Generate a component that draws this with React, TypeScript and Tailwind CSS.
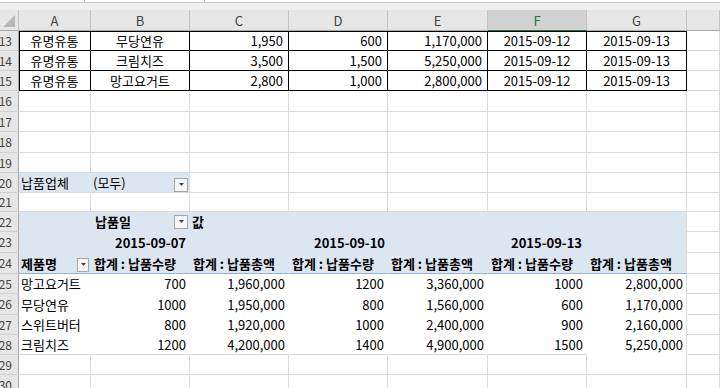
import type { ReactNode } from 'react'

const W = ['w-[72px]', 'w-[99px]', 'w-[99px]', 'w-[99px]', 'w-[100px]', 'w-[99px]', 'w-[100px]', 'w-[33px]']

const H: Record<number, string> = {
  13: 'h-[20px]',
  14: 'h-[20px]',
  15: 'h-[20px]',
  16: 'h-[21px]',
  17: 'h-[20px]',
  18: 'h-[21px]',
  19: 'h-[20px]',
  20: 'h-[20px]',
  21: 'h-[19px]',
  22: 'h-[20px]',
  23: 'h-[21px]',
  24: 'h-[21px]',
  25: 'h-[20px]',
  26: 'h-[21px]',
  27: 'h-[20px]',
  28: 'h-[20px]',
  29: 'h-[20px]',
  30: 'h-[20px]'
}

const grid = 'border-[#dadada] bg-white'
const black = 'border-black bg-white'
const blue = 'border-[#dce6f1] bg-[#dce6f1]'
const blueEdge = 'border-r-[#dadada] border-b-[#dce6f1] bg-[#dce6f1]'
const blank = 'border-white bg-white'
const blankEdge = 'border-r-[#dadada] border-b-white bg-white'

const Row = ({ n, children }: { n: number; children: ReactNode }) => (
  <div className={`flex ${H[n]}`}>
    <div className="flex w-[19px] shrink-0 items-center justify-end overflow-hidden border-r border-b border-r-[#a8a8a8] border-b-[#d0d0d0] bg-[#e6e6e6] pr-[6px] text-[12px] text-[#444]">
      {n}
    </div>
    {children}
  </div>
)

const Cell = ({ c, className = '', children }: { c: number; className?: string; children?: ReactNode }) => (
  <div
    className={`${W[c]} flex shrink-0 items-center overflow-hidden whitespace-nowrap border-r border-b ${className}`}
  >
    {children}
  </div>
)

const Drop = ({ className = '' }: { className?: string }) => (
  <span
    className={`flex h-[14px] shrink-0 items-center justify-center border border-[#a6a6a6] bg-[#f7f7f7] ${className}`}
  >
    <svg height="3" viewBox="0 0 5 3" width="5">
      <path d="M0 0h5L2.5 3z" fill="#444" />
    </svg>
  </span>
)

const EmptyRow = ({ n }: { n: number }) => (
  <Row n={n}>
    {W.map((_, i) => (
      <Cell c={i} className={grid} key={i} />
    ))}
  </Row>
)

const source = [
  ['유명유통', '무당연유', '1,950', '600', '1,170,000', '2015-09-12', '2015-09-13'],
  ['유명유통', '크림치즈', '3,500', '1,500', '5,250,000', '2015-09-12', '2015-09-13'],
  ['유명유통', '망고요거트', '2,800', '1,000', '2,800,000', '2015-09-12', '2015-09-13']
]

const pivot = [
  ['망고요거트', '700', '1,960,000', '1200', '3,360,000', '1000', '2,800,000'],
  ['무당연유', '1000', '1,950,000', '800', '1,560,000', '600', '1,170,000'],
  ['스위트버터', '800', '1,920,000', '1000', '2,400,000', '900', '2,160,000'],
  ['크림치즈', '1200', '4,200,000', '1400', '4,900,000', '1500', '5,250,000']
]

const letters = ['A', 'B', 'C', 'D', 'E', 'F', 'G', '']

const App = () => {
  return (
    <div className="h-[388px] w-[720px] overflow-hidden bg-white font-['Noto_Sans_CJK_KR','Noto_Sans',sans-serif] text-[13px] leading-none text-black">
      {/* formula bar remains */}
      <div className="flex h-[3px] border-b border-[#c8c8c8] bg-white">
        <div className="w-[85px] border-r border-[#c8c8c8]" />
        <div className="w-[120px] border-r border-[#c8c8c8]" />
      </div>
      <div className="h-[7px] bg-[#efefef]" />

      {/* column headers */}
      <div className="flex h-[21px] bg-[#e6e6e6]">
        <div className="relative w-[19px] shrink-0 border-r border-b border-r-[#c4c4c4] border-b-[#a8a8a8]">
          <svg className="absolute right-[3px] bottom-[3px]" height="12" viewBox="0 0 12 12" width="12">
            <path d="M12 0V12H0z" fill="#b8b8b8" />
          </svg>
        </div>
        {letters.map((l, i) => (
          <div
            className={`${W[i]} flex shrink-0 items-center justify-center border-r border-b text-[13px] ${
              l === 'F'
                ? 'border-r-[#c4c4c4] border-b-[#217346] bg-[#d2d2d2] text-[#217346]'
                : 'border-r-[#c4c4c4] border-b-[#a8a8a8] text-[#444]'
            }`}
            key={i}
          >
            {l}
          </div>
        ))}
      </div>

      {/* source rows */}
      {source.map((r, ri) => (
        <Row key={ri} n={13 + ri}>
          {r.map((v, i) => (
            <Cell
              c={i}
              className={`${black} ${i <= 1 || i >= 5 ? 'justify-center' : 'justify-end pr-[5px]'} ${
                ri === 0
                  ? i === 0
                    ? 'shadow-[inset_1px_1px_0_#000]'
                    : 'shadow-[inset_0_1px_0_#000]'
                  : i === 0
                    ? 'shadow-[inset_1px_0_0_#000]'
                    : ''
              }`}
              key={i}
            >
              {v}
            </Cell>
          ))}
          <Cell c={7} className={grid} />
        </Row>
      ))}

      <EmptyRow n={16} />
      <EmptyRow n={17} />
      <EmptyRow n={18} />
      <EmptyRow n={19} />

      {/* report filter */}
      <Row n={20}>
        <Cell c={0} className="border-r-[#dce6f1] border-b-[#dadada] bg-[#dce6f1] pl-[2px]">
          납품업체
        </Cell>
        <Cell c={1} className="justify-between border-r-[#dadada] border-b-[#dadada] bg-[#dce6f1] pl-[2px]">
          <span>(모두)</span>
          <Drop className="mt-[4px] mr-[1px] w-[14px]" />
        </Cell>
        {[2, 3, 4, 5, 6, 7].map((i) => (
          <Cell c={i} className={grid} key={i} />
        ))}
      </Row>

      <EmptyRow n={21} />

      {/* pivot header */}
      <Row n={22}>
        <Cell c={0} className={blue} />
        <Cell c={1} className={`${blue} justify-between pl-[4px] font-bold`}>
          <span>납품일</span>
          <Drop className="mr-[1px] w-[14px]" />
        </Cell>
        <Cell c={2} className={`${blue} pl-[2px] font-bold`}>
          값
        </Cell>
        <Cell c={3} className={blue} />
        <Cell c={4} className={blue} />
        <Cell c={5} className={blue} />
        <Cell c={6} className={blueEdge} />
        <Cell c={7} className={grid} />
      </Row>
      <Row n={23}>
        <Cell c={0} className={blue} />
        <Cell c={1} className={`${blue} justify-end pr-[3px] font-bold`}>
          2015-09-07
        </Cell>
        <Cell c={2} className={blue} />
        <Cell c={3} className={`${blue} justify-end pr-[2px] font-bold`}>
          2015-09-10
        </Cell>
        <Cell c={4} className={blue} />
        <Cell c={5} className={`${blue} justify-end pr-[4px] font-bold`}>
          2015-09-13
        </Cell>
        <Cell c={6} className={blueEdge} />
        <Cell c={7} className={grid} />
      </Row>
      <Row n={24}>
        <Cell c={0} className="justify-between border-r-[#dce6f1] border-b-[#95b3d7] bg-[#dce6f1] pl-[2px] font-bold">
          <span>제품명</span>
          <Drop className="mt-[3px] mr-[1px] w-[12px]" />
        </Cell>
        {['합계 : 납품수량', '합계 : 납품총액', '합계 : 납품수량', '합계 : 납품총액', '합계 : 납품수량', '합계 : 납품총액'].map(
          (t, i) => (
            <Cell
              c={i + 1}
              className={`border-b-[#95b3d7] bg-[#dce6f1] pl-[3px] font-bold ${
                i === 5 ? 'border-r-[#dadada]' : 'border-r-[#dce6f1]'
              }`}
              key={i}
            >
              {t}
            </Cell>
          )
        )}
        <Cell c={7} className={grid} />
      </Row>

      {/* pivot body */}
      {pivot.map((r, ri) => (
        <Row key={ri} n={25 + ri}>
          {r.map((v, i) => (
            <Cell
              c={i}
              className={`${i === 6 ? blankEdge : blank} ${ri === 3 ? 'border-b-[#dadada]' : ''} ${
                i === 0 ? 'pl-[2px]' : 'justify-end pr-[3px]'
              }`}
              key={i}
            >
              {v}
            </Cell>
          ))}
          <Cell c={7} className={grid} />
        </Row>
      ))}

      <EmptyRow n={29} />
      <EmptyRow n={30} />
    </div>
  )
}

export default App
